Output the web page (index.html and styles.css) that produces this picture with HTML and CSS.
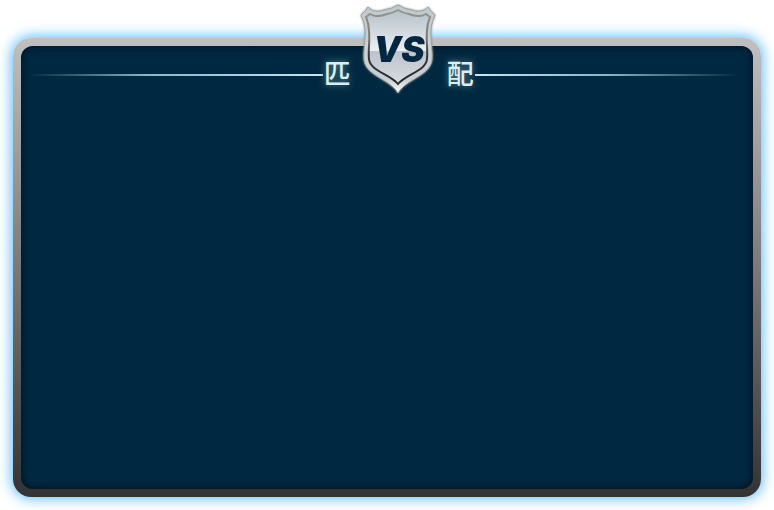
FILE: index.html
```html
<!DOCTYPE html>
<html lang="zh-CN">
<head>
<meta charset="utf-8">
<meta name="viewport" content="width=device-width, initial-scale=1">
<title>匹配</title>
<link rel="stylesheet" href="styles.css">
</head>
<body>
<main class="frame">
  <section class="panel">
    <header class="heading">
      <span class="rule rule-left"></span>
      <h1 class="title"><span>匹</span><span>配</span></h1>
      <span class="rule rule-right"></span>
    </header>
  </section>
  <svg class="badge" viewBox="0 0 100 100" role="img" aria-label="VS">
    <defs>
      <linearGradient id="rim" x1="0" y1="0" x2="0" y2="1">
        <stop offset="0" stop-color="#bdc9d0"/>
        <stop offset=".5" stop-color="#ccd2d7"/>
        <stop offset=".85" stop-color="#c9d0d5"/>
        <stop offset="1" stop-color="#ffffff"/>
      </linearGradient>
      <linearGradient id="groove" x1="0" y1="0" x2="0" y2="1">
        <stop offset="0" stop-color="#9b958c"/>
        <stop offset=".4" stop-color="#77756f"/>
        <stop offset=".6" stop-color="#34383a"/>
        <stop offset="1" stop-color="#24292b"/>
      </linearGradient>
      <linearGradient id="upper" gradientUnits="userSpaceOnUse" x1="0" y1="10" x2="0" y2="51">
        <stop offset="0" stop-color="#b5c1c9"/>
        <stop offset="1" stop-color="#eceff2"/>
      </linearGradient>
      <linearGradient id="lower" gradientUnits="userSpaceOnUse" x1="0" y1="51" x2="0" y2="86">
        <stop offset="0" stop-color="#bcc3cb"/>
        <stop offset="1" stop-color="#d9dee3"/>
      </linearGradient>
      <path id="shield" d="M18 7C22 12 29 12 34 10Q42 9 48 5Q54 9 62 10C67 12 74 12 78 7Q81 12 85 15Q82 21 81 28C80 40 83 51 82 60C80 76 56 79 48 93C40 79 16 76 14 60C13 51 16 40 15 28Q14 21 11 15Q15 12 18 7Z"/>
      <path id="face" d="M20 14C25 17 32 16 37 14Q43 13 48 10Q53 13 59 14C64 16 71 17 76 14L80 17Q77 24 77 31C76 42 78 51 77 59C76 71 56 74 48 84C40 74 20 71 19 59C18 51 20 42 19 31Q19 24 16 17Z"/>
      <clipPath id="half"><path d="M0 51H100V100H0Z"/></clipPath>
    </defs>
    <use href="#shield" fill="url(#rim)" stroke="#a5a49e"/>
    <use href="#face" fill="url(#upper)"/>
    <g clip-path="url(#half)"><use href="#face" fill="url(#lower)"/></g>
    <use href="#face" fill="none" stroke="url(#groove)" stroke-width="2"/>
    <text class="mark" x="49" y="62" text-anchor="middle">VS</text>
  </svg>
</main>
</body>
</html>
```
FILE: styles.css
```css
* {
  box-sizing: border-box;
}

body {
  margin: 0;
  min-height: 100vh;
  display: flex;
  padding: 38px 13px 13px;
  background: #fff;
  font-family: "Liberation Sans", "Noto Sans CJK SC", sans-serif;
}

.frame {
  position: relative;
  flex: 1;
  display: flex;
  padding: 8px;
  border-radius: 18px;
  background: linear-gradient(#c0c0c0, #333);
  box-shadow: 0 0 14px 1px #4db5ff;
}

.panel {
  flex: 1;
  border-radius: 12px;
  background: #002941;
  box-shadow: inset 0 0 9px 0 #000e19;
}

.heading {
  display: flex;
  align-items: center;
  padding: 13px 14px 0 8px;
}

.rule {
  height: 2px;
}

.rule-left {
  flex: 10;
  background: linear-gradient(to right, transparent, #8db4c8 40%, #c4e6f5);
}

.rule-right {
  flex: 9;
  background: linear-gradient(to left, transparent, #8db4c8 50%, #c4e6f5);
}

.title {
  display: flex;
  justify-content: space-between;
  width: 152px;
  margin: 0;
  padding: 0 1px;
  font-size: 27px;
  line-height: 32px;
  font-weight: 500;
  color: #d9eff5;
  text-shadow: 0 0 7px #5d8a94;
}

.badge {
  position: absolute;
  top: -38px;
  left: calc(50% - 37px);
  width: 100px;
  height: 100px;
  filter: drop-shadow(0 0 1px #8f8f86);
}

.mark {
  fill: #002941;
  font-family: Inter, sans-serif;
  font-size: 35px;
  font-weight: 900;
  font-style: italic;
}
```
